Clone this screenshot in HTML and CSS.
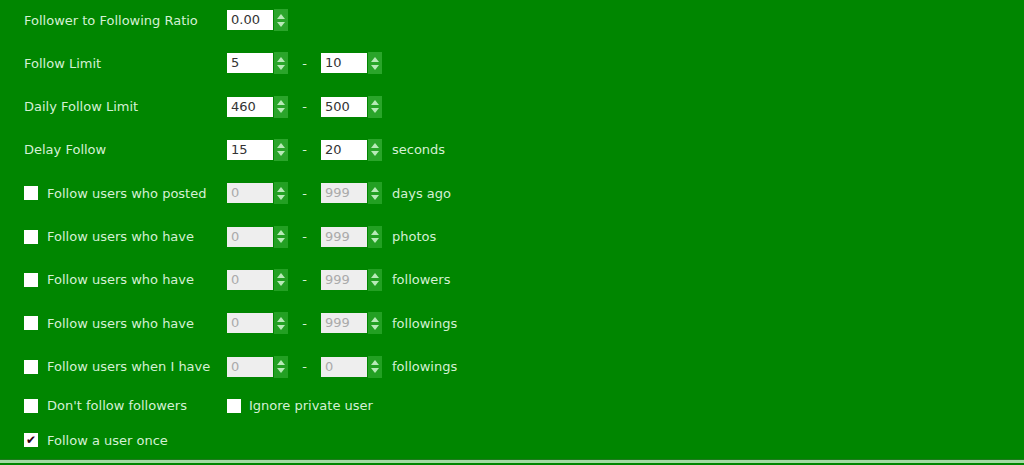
FILE: index.html
```html
<!DOCTYPE html>
<html>
<head>
<meta charset="utf-8">
<link rel="stylesheet" href="styles.css">
</head>
<body>
<div class="page">
  <div class="form">
    <div class="row">
      <span class="label">Follower to Following Ratio</span>
      <span class="num"><span class="box">0.00</span><span class="spin"><i class="up"></i><i class="down"></i></span></span>
    </div>
    <div class="row">
      <span class="label">Follow Limit</span>
      <span class="num"><span class="box">5</span><span class="spin"><i class="up"></i><i class="down"></i></span></span>
      <span class="dash">-</span>
      <span class="num"><span class="box">10</span><span class="spin"><i class="up"></i><i class="down"></i></span></span>
    </div>
    <div class="row">
      <span class="label">Daily Follow Limit</span>
      <span class="num"><span class="box">460</span><span class="spin"><i class="up"></i><i class="down"></i></span></span>
      <span class="dash">-</span>
      <span class="num"><span class="box">500</span><span class="spin"><i class="up"></i><i class="down"></i></span></span>
    </div>
    <div class="row">
      <span class="label">Delay Follow</span>
      <span class="num"><span class="box">15</span><span class="spin"><i class="up"></i><i class="down"></i></span></span>
      <span class="dash">-</span>
      <span class="num"><span class="box">20</span><span class="spin"><i class="up"></i><i class="down"></i></span></span>
      <span class="suffix">seconds</span>
    </div>
    <div class="row">
      <span class="label"><span class="cb"></span>Follow users who posted</span>
      <span class="num off"><span class="box">0</span><span class="spin"><i class="up"></i><i class="down"></i></span></span>
      <span class="dash">-</span>
      <span class="num off"><span class="box">999</span><span class="spin"><i class="up"></i><i class="down"></i></span></span>
      <span class="suffix">days ago</span>
    </div>
    <div class="row">
      <span class="label"><span class="cb"></span>Follow users who have</span>
      <span class="num off"><span class="box">0</span><span class="spin"><i class="up"></i><i class="down"></i></span></span>
      <span class="dash">-</span>
      <span class="num off"><span class="box">999</span><span class="spin"><i class="up"></i><i class="down"></i></span></span>
      <span class="suffix">photos</span>
    </div>
    <div class="row">
      <span class="label"><span class="cb"></span>Follow users who have</span>
      <span class="num off"><span class="box">0</span><span class="spin"><i class="up"></i><i class="down"></i></span></span>
      <span class="dash">-</span>
      <span class="num off"><span class="box">999</span><span class="spin"><i class="up"></i><i class="down"></i></span></span>
      <span class="suffix">followers</span>
    </div>
    <div class="row">
      <span class="label"><span class="cb"></span>Follow users who have</span>
      <span class="num off"><span class="box">0</span><span class="spin"><i class="up"></i><i class="down"></i></span></span>
      <span class="dash">-</span>
      <span class="num off"><span class="box">999</span><span class="spin"><i class="up"></i><i class="down"></i></span></span>
      <span class="suffix">followings</span>
    </div>
    <div class="row">
      <span class="label"><span class="cb"></span>Follow users when I have</span>
      <span class="num off"><span class="box">0</span><span class="spin"><i class="up"></i><i class="down"></i></span></span>
      <span class="dash">-</span>
      <span class="num off"><span class="box">0</span><span class="spin"><i class="up"></i><i class="down"></i></span></span>
      <span class="suffix">followings</span>
    </div>
    <div class="row row-check first-check">
      <span class="label"><span class="cb"></span>Don't follow followers</span>
      <span class="opt"><span class="cb"></span>Ignore private user</span>
    </div>
    <div class="row row-check second-check">
      <span class="label"><span class="cb checked">&#10004;</span>Follow a user once</span>
    </div>
  </div>
  <div class="spacer"></div>
  <div class="rule"></div>
</div>
</body>
</html>
```

FILE: styles.css
```css
html, body {
  margin: 0;
  padding: 0;
  background: #008600;
}
.page {
  height: 465px;
  display: flex;
  flex-direction: column;
  font-family: "DejaVu Sans", Verdana, sans-serif;
  font-size: 13px;
  color: #d4f0d4;
}
.form {
  padding: 9px 0 0 24px;
  display: flex;
  flex-direction: column;
  gap: 21.33px;
}
.row {
  height: 22px;
  display: flex;
  align-items: center;
  white-space: nowrap;
}
.label {
  width: 203px;
  display: flex;
  align-items: center;
}
.cb {
  width: 14px;
  height: 14px;
  background: #fff;
  margin-right: 9px;
  display: inline-flex;
  align-items: center;
  justify-content: center;
  color: #2a0010;
  font-size: 12px;
  line-height: 1;
}
.num {
  display: flex;
  height: 22px;
  align-items: stretch;
}
.box {
  width: 42px;
  height: 20px;
  margin-top: 1px;
  background: #fff;
  color: #333;
  padding-left: 4px;
  line-height: 20px;
  font-size: 13px;
}
.num.off .box {
  background: #eeeeee;
  color: #aaaaaa;
}
.spin {
  width: 14px;
  margin-left: 1px;
  background: #2aa52a;
  display: flex;
  flex-direction: column;
  align-items: center;
  justify-content: center;
  gap: 3px;
}
.num.off .spin {
  background: #23a023;
}
.spin i {
  width: 0;
  height: 0;
  border-left: 4px solid transparent;
  border-right: 4px solid transparent;
}
.spin .up {
  border-bottom: 5px solid #b8eab8;
}
.spin .down {
  border-top: 5px solid #b8eab8;
}
.dash {
  width: 33px;
  text-align: center;
}
.suffix {
  margin-left: 10px;
}
.first-check {
  margin-top: -4px;
}
.second-check {
  margin-top: -9px;
}
.opt {
  display: flex;
  align-items: center;
}
.opt .cb {
  margin-right: 8px;
}
.spacer {
  flex: 1;
}
.rule {
  height: 3px;
  background: #a2dba2;
  border-top: 1px solid #1f7a1f;
  margin-bottom: 2px;
}
```
